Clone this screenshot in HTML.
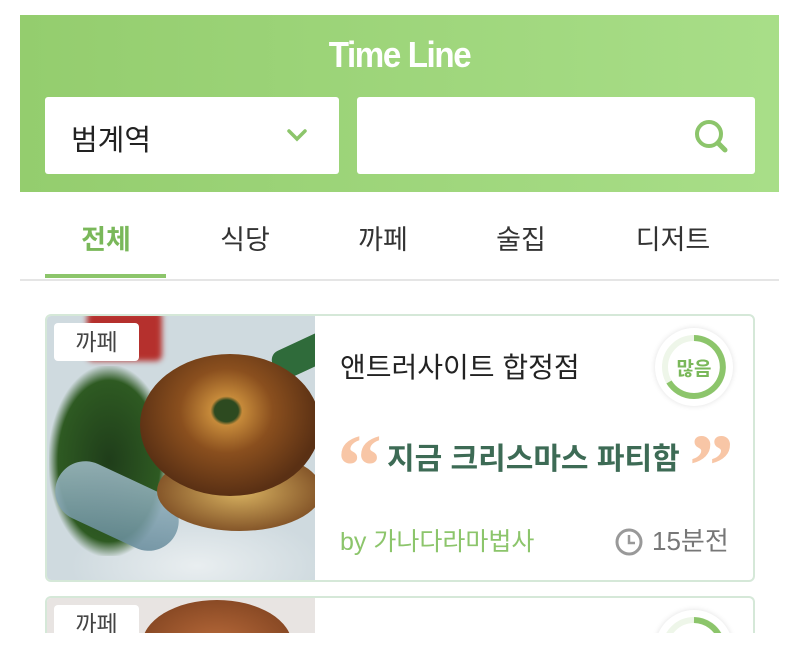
<!DOCTYPE html>
<html><head><meta charset="utf-8"><style>
*{margin:0;padding:0;box-sizing:border-box}
html,body{width:800px;height:650px;overflow:hidden}
body{background:#fff;position:relative;font-family:"Liberation Sans","Noto Sans CJK KR",sans-serif}
.hdr{position:absolute;left:20px;top:15px;width:759px;height:177px;background:linear-gradient(90deg,#94cd6e,#a8de88)}
.title{position:absolute;left:0;right:0;top:19px;text-align:center;color:#fff;font-size:36px;font-weight:bold;letter-spacing:-1.5px;transform:scaleX(.92)}
.box{position:absolute;background:#fff;border-radius:3px;top:82px;height:77px}
.sel{left:25px;width:294px}
.sel span{position:absolute;left:26px;top:20px;font-size:29px;color:#222}
.srch{left:337px;width:398px}
.tabs{position:absolute;top:218px;left:0;width:800px;font-size:27px;color:#333}
.tabs span{position:absolute;transform:translateX(-50%)}
.ul{position:absolute;left:45px;top:274px;width:121px;height:4px;background:#8cc56b}
.line{position:absolute;left:20px;top:279px;width:759px;height:2px;background:#e5e5e5}
.card{position:absolute;left:45px;width:710px;border:2px solid #d5e8d8;border-radius:6px;overflow:hidden;background:#fff}
.img{position:absolute;left:0;top:0;width:268px;height:100%;background:radial-gradient(ellipse 140px 60px at 150px 250px,#e9eef0,#cfdadf 90%);overflow:hidden}
.tag{position:absolute;left:7px;top:7px;width:85px;height:38px;background:#fff;border-radius:4px;font-size:23px;color:#444;text-align:center;line-height:38px}
.ring{position:absolute;left:608px;top:12px;width:78px;height:78px;border-radius:50%;background:#fff;box-shadow:0 0 6px rgba(0,0,0,.12)}
.q{position:absolute;font-size:90px;color:#f8c6a6;font-weight:bold;font-family:'Liberation Serif',serif;line-height:1}
</style></head><body>
<div class="hdr">
 <div class="title">Time Line</div>
 <div class="box sel"><span>범계역</span>
  <svg style="position:absolute;left:241px;top:31px" width="22" height="14" viewBox="0 0 22 14"><path d="M3 3l8 8 8-8" fill="none" stroke="#8cc56b" stroke-width="3.5" stroke-linecap="round"/></svg></div>
 <div class="box srch"><svg style="position:absolute;left:335px;top:21px" width="40" height="38" viewBox="0 0 40 38"><circle cx="17" cy="16" r="12" fill="none" stroke="#8cc56b" stroke-width="4"/><path d="M26 25l7 7" stroke="#8cc56b" stroke-width="5" stroke-linecap="round"/></svg></div>
</div>
<div class="tabs">
 <span style="left:106px;color:#7ab85a;font-weight:bold">전체</span>
 <span style="left:245px">식당</span>
 <span style="left:383px">까페</span>
 <span style="left:521px">술집</span>
 <span style="left:673px">디저트</span>
</div>
<div class="ul"></div><div class="line"></div>

<div class="card" style="top:314px;height:268px">
 <div class="img">
  <div style="position:absolute;left:40px;top:-5px;width:75px;height:50px;background:#b5302d;border-radius:6px;filter:blur(3px)"></div>
  <div style="position:absolute;left:2px;top:50px;width:120px;height:190px;background:radial-gradient(ellipse at 50% 50%,#1f3d1a,#2e5a22 60%,rgba(46,90,34,0) 72%)"></div>
  <div style="position:absolute;left:225px;top:25px;width:60px;height:30px;background:#2f6b3a;transform:rotate(-25deg);border-radius:10px"></div>
  <div style="position:absolute;left:5px;top:160px;width:130px;height:60px;background:linear-gradient(160deg,#a9c4cf,#5f8596);transform:rotate(25deg);border-radius:30px;opacity:.85"></div>
  <div style="position:absolute;left:110px;top:135px;width:165px;height:80px;border-radius:50%;background:radial-gradient(ellipse,#d9b361,#7a4a22 80%)"></div>
  <div style="position:absolute;left:93px;top:38px;width:180px;height:142px;border-radius:50%;background:radial-gradient(ellipse at 48% 40%,#2d4a20 9%,#c68a3a 12%,#8a4f1e 35%,#5a3014 70%)"></div>
  <div class="tag">까페</div>
 </div>
 <div style="position:absolute;left:293px;top:30px;font-size:28px;color:#222">앤트러사이트 합정점</div>
 <div class="ring"><svg width="78" height="78" viewBox="0 0 78 78"><circle cx="39" cy="39" r="29" fill="none" stroke="#eef6e9" stroke-width="6"/><path d="M39 10A29 29 0 1 1 14 54" fill="none" stroke="#8cc56b" stroke-width="6"/><text x="39" y="47" text-anchor="middle" font-size="19" font-weight="bold" fill="#7ab85a" font-family="Noto Sans CJK KR,sans-serif">많음</text></svg></div>
 <div class="q" style="left:290px;top:106px">“</div>
 <div style="position:absolute;left:340px;top:118px;font-size:30px;color:#3d6b55;font-weight:bold">지금 크리스마스 파티함</div>
 <div class="q" style="left:642px;top:106px">”</div>
 <div style="position:absolute;left:293px;top:206px;font-size:25px;color:#8cc56b">by 가나다라마법사</div>
 <svg style="position:absolute;left:567px;top:211px" width="30" height="30" viewBox="0 0 30 30"><circle cx="15" cy="15" r="12" fill="none" stroke="#999" stroke-width="3"/><path d="M15 8v8h6" fill="none" stroke="#999" stroke-width="2.5"/></svg>
 <div style="position:absolute;left:605px;top:205px;font-size:26px;color:#777">15분전</div>
</div>

<div class="card" style="top:596px;height:37px;border-bottom:none;border-radius:6px 6px 0 0">
 <div class="img" style="background:#e8e4e2">
  <div style="position:absolute;left:95px;top:2px;width:150px;height:90px;border-radius:50%;background:radial-gradient(ellipse,#b86a3a,#8a4a25 70%)"></div>
  <div class="tag">까페</div>
 </div>
 <div class="ring"><svg width="78" height="78" viewBox="0 0 78 78"><circle cx="39" cy="39" r="29" fill="none" stroke="#eef6e9" stroke-width="6"/><path d="M39 10A29 29 0 0 1 66 30" fill="none" stroke="#8cc56b" stroke-width="6"/></svg></div>
</div>
</body></html>
